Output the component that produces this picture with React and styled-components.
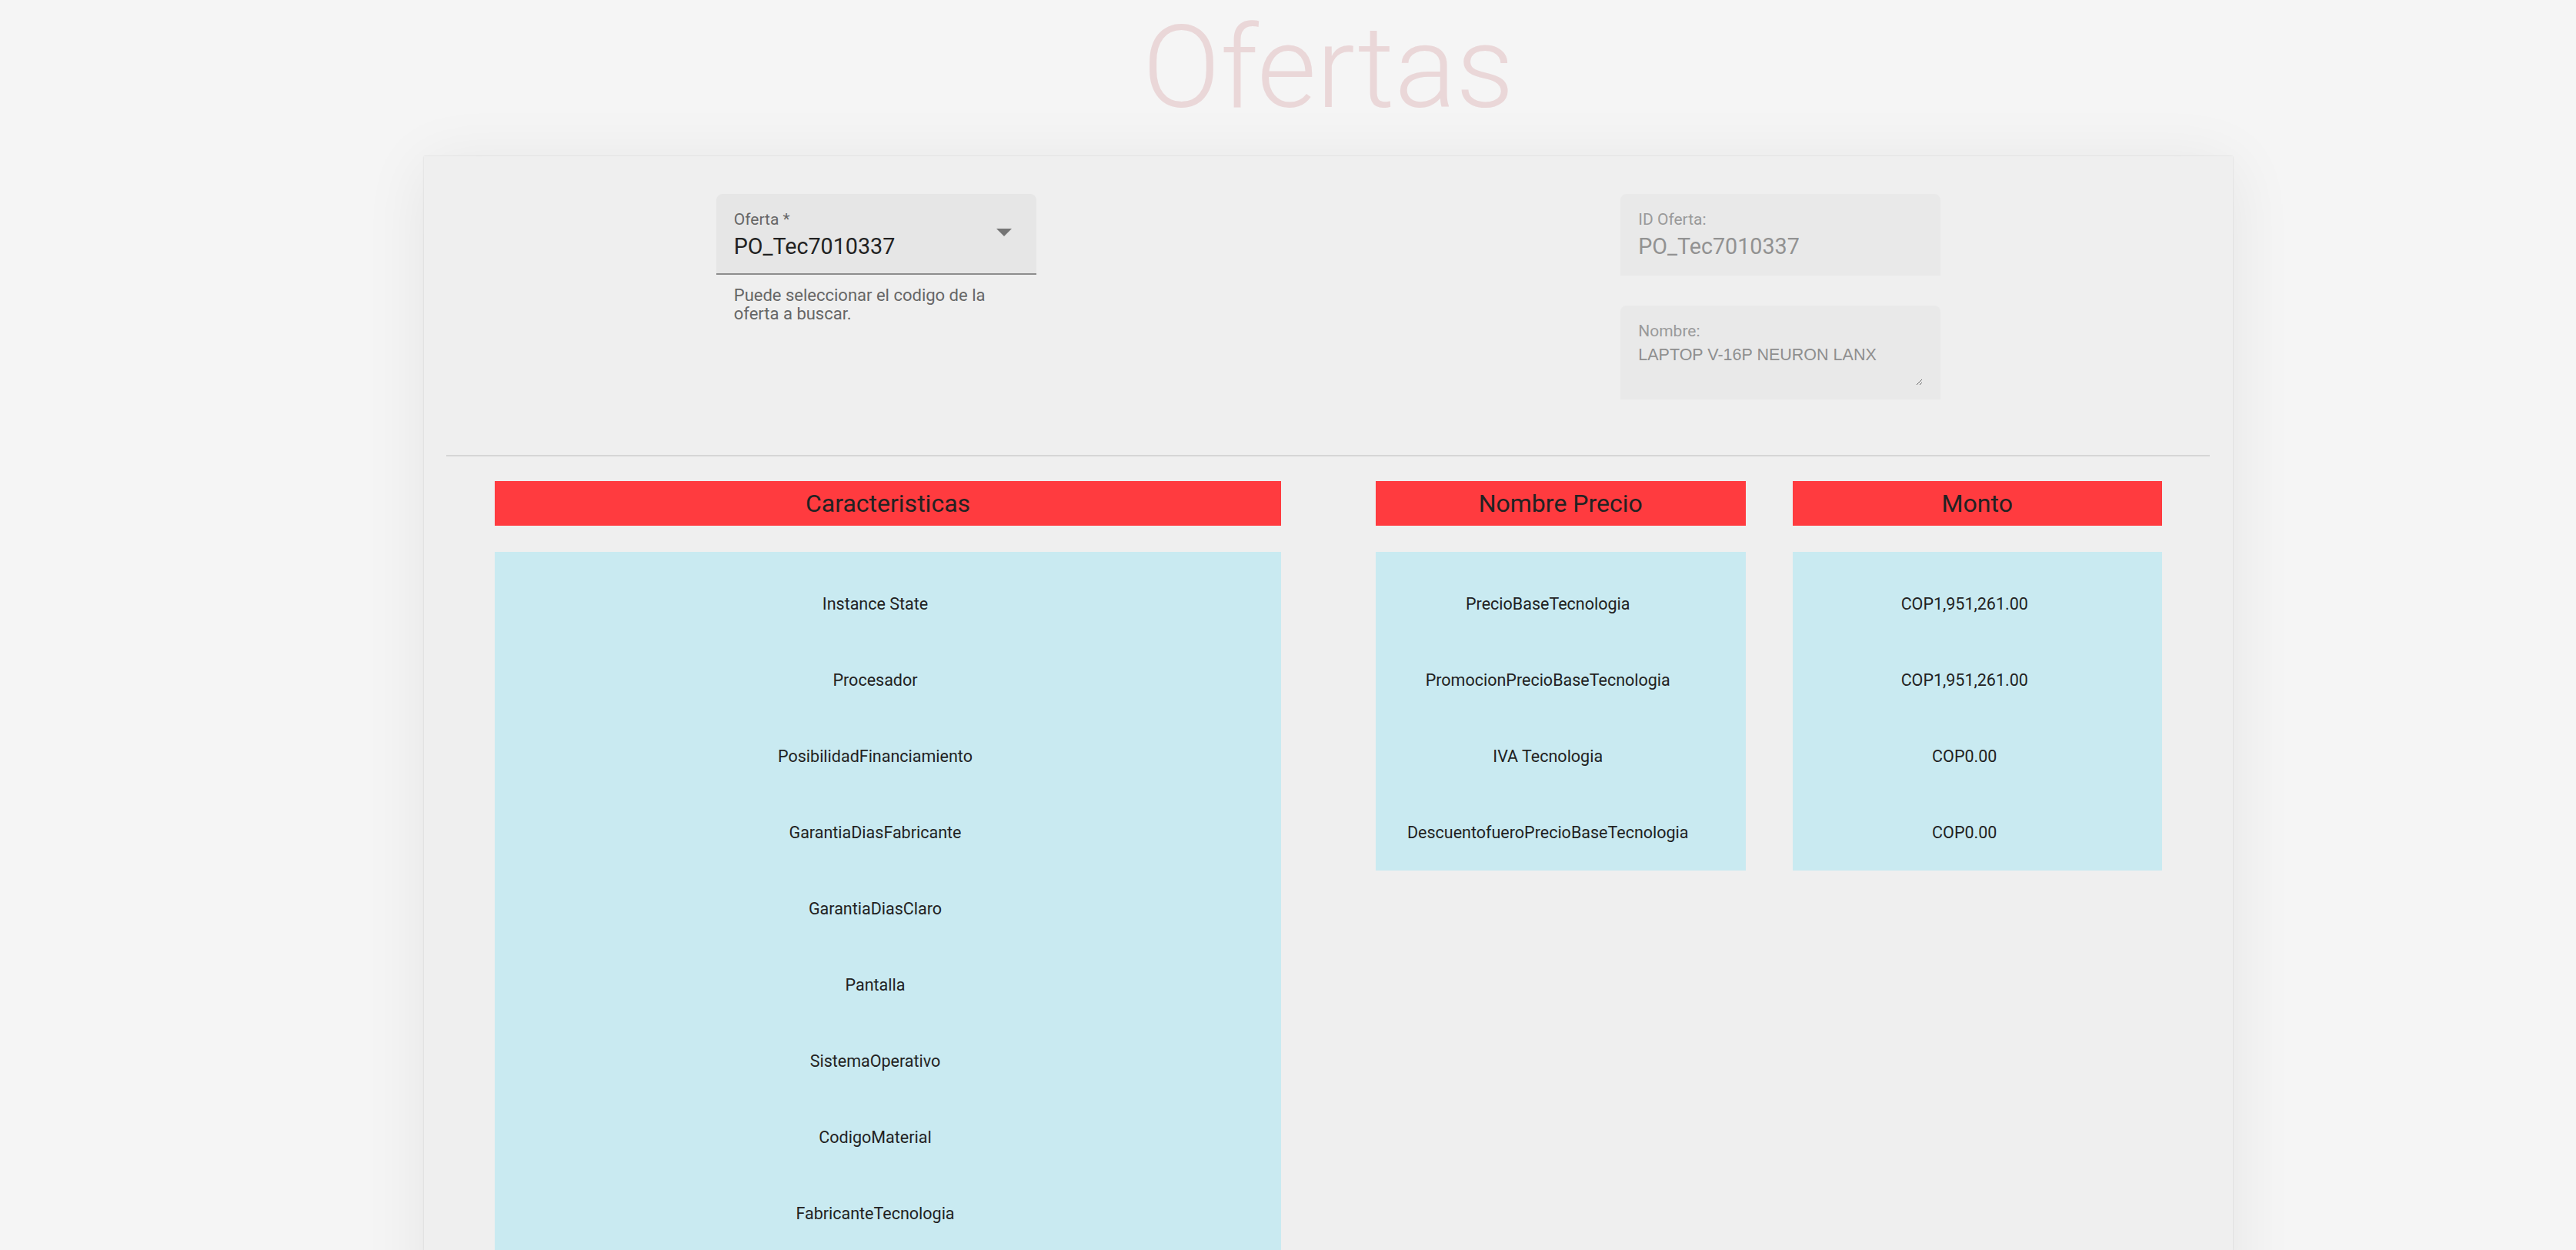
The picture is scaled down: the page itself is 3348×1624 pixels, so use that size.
import React from 'react';
import styled, { createGlobalStyle } from 'styled-components';

//

const caracteristicas = [
  'Instance State',
  'Procesador',
  'PosibilidadFinanciamiento',
  'GarantiaDiasFabricante',
  'GarantiaDiasClaro',
  'Pantalla',
  'SistemaOperativo',
  'CodigoMaterial',
  'FabricanteTecnologia',
];

const precios = [
  { nombre: 'PrecioBaseTecnologia', monto: 'COP1,951,261.00' },
  { nombre: 'PromocionPrecioBaseTecnologia', monto: 'COP1,951,261.00' },
  { nombre: 'IVA Tecnologia', monto: 'COP0.00' },
  { nombre: 'DescuentofueroPrecioBaseTecnologia', monto: 'COP0.00' },
];

const App = () => (
  <>
    <GlobalStyle />
    <Page>
      <Title>Ofertas</Title>

      <Card>
        <SearchSection>
          <FieldColumn>
            <SelectField>
              <FieldInner>
                <Label>Oferta *</Label>
                <Value>PO_Tec7010337</Value>
              </FieldInner>
              <Arrow viewBox="0 0 20 10" width="20" height="10">
                <path d="M0 0 L10 10 L20 0 Z" fill="#757575" />
              </Arrow>
            </SelectField>
            <Helper>Puede seleccionar el codigo de la oferta a buscar.</Helper>
          </FieldColumn>

          <FieldColumn>
            <ReadField>
              <Label disabled>ID Oferta:</Label>
              <Value disabled>PO_Tec7010337</Value>
            </ReadField>
            <ReadField tall>
              <Label disabled>Nombre:</Label>
              <NameArea readOnly rows={2} value="LAPTOP V-16P NEURON LANX" />
            </ReadField>
          </FieldColumn>
        </SearchSection>

        <Divider />

        <Tables>
          <Column>
            <Header>Caracteristicas</Header>
            <Body>
              {caracteristicas.map((c) => (
                <Row key={c}>{c}</Row>
              ))}
            </Body>
          </Column>

          <PriceGroup>
            <Column>
              <Header>Nombre Precio</Header>
              <Body>
                {precios.map((p) => (
                  <Row key={p.nombre}>{p.nombre}</Row>
                ))}
              </Body>
            </Column>
            <Column>
              <Header>Monto</Header>
              <Body>
                {precios.map((p) => (
                  <Row key={p.nombre}>{p.monto}</Row>
                ))}
              </Body>
            </Column>
          </PriceGroup>
        </Tables>
      </Card>
    </Page>
  </>
);

export default App;

const GlobalStyle = createGlobalStyle`
  html, body {
    margin: 0;
    padding: 0;
    background: #f5f5f5;
    font-family: Roboto, "Noto Sans", sans-serif;
  }
  * {
    box-sizing: border-box;
  }
`;

const Page = styled.div`
  padding: 14px 0 0 105px;
  min-height: 1624px;
  overflow: hidden;
`;

const Title = styled.h1`
  margin: 0 0 40px;
  font-size: 149px;
  line-height: 149px;
  font-weight: 300;
  color: #ead7d8;
  text-align: center;
`;

const Card = styled.div`
  width: 2351px;
  margin: 0 auto;
  min-height: 1500px;
  background: #efefef;
  box-shadow: 0 0 2px rgba(0, 0, 0, 0.12), 0 10px 80px rgba(0, 0, 0, 0.07);
  padding-top: 49px;
`;

const SearchSection = styled.div`
  display: grid;
  grid-template-columns: 1fr 1fr;
  justify-items: center;
`;

const FieldColumn = styled.div`
  width: 416px;
  display: flex;
  flex-direction: column;
  gap: 39px;
`;

const SelectField = styled.div`
  display: flex;
  height: 105px;
  padding: 21px 0 0 23px;
  background: #e6e6e6;
  border-radius: 8px 8px 0 0;
  border-bottom: 2px solid #8d8d8d;
`;

const FieldInner = styled.div`
  flex: 1;
`;

const Arrow = styled.svg`
  margin: 24px 32px 0 0;
`;

const ReadField = styled.div`
  height: ${(p) => (p.tall ? '122px' : '106px')};
  padding: 21px 23px 0;
  background: #e9e9e9;
  border-radius: 8px 8px 0 0;
`;

const Label = styled.div`
  font-size: 21px;
  line-height: 24px;
  color: ${(p) => (p.disabled ? '#9a9a9a' : '#666666')};
`;

const Value = styled.div`
  margin-top: 6px;
  font-size: 28.7px;
  line-height: 34px;
  color: ${(p) => (p.disabled ? '#929292' : '#222222')};
`;

const NameArea = styled.textarea`
  display: block;
  width: 100%;
  height: 53px;
  margin-top: 6px;
  padding: 0;
  border: none;
  outline: none;
  background: transparent;
  resize: vertical;
  font-family: "Liberation Sans", Arial, sans-serif;
  font-size: 21.5px;
  line-height: 26px;
  color: #8f8f8f;
`;

const Helper = styled.div`
  margin-top: -24px;
  padding: 0 23px;
  font-size: 22px;
  line-height: 24px;
  color: #666666;
`;

const Divider = styled.hr`
  margin: 72px 30px 0 29px;
  border: none;
  height: 2px;
  background: #d6d6d6;
`;

const Tables = styled.div`
  display: grid;
  grid-template-columns: 1fr 1fr;
  column-gap: 123px;
  align-items: start;
  padding: 32px 92px 0;
`;

const PriceGroup = styled.div`
  display: grid;
  grid-template-columns: 1fr 1fr;
  column-gap: 61px;
  align-items: start;
`;

const Column = styled.div`
  display: flex;
  flex-direction: column;
`;

const Header = styled.div`
  height: 58px;
  line-height: 58px;
  background: #ff3b3f;
  color: #222222;
  font-size: 32px;
  text-align: center;
`;

const Body = styled.div`
  margin-top: 34px;
  padding: 18px 33px 0 0;
  background: #c9eaf1;
`;

const Row = styled.div`
  height: 99px;
  line-height: 99px;
  text-align: center;
  font-size: 21.5px;
  color: #222222;
  white-space: nowrap;
`;
